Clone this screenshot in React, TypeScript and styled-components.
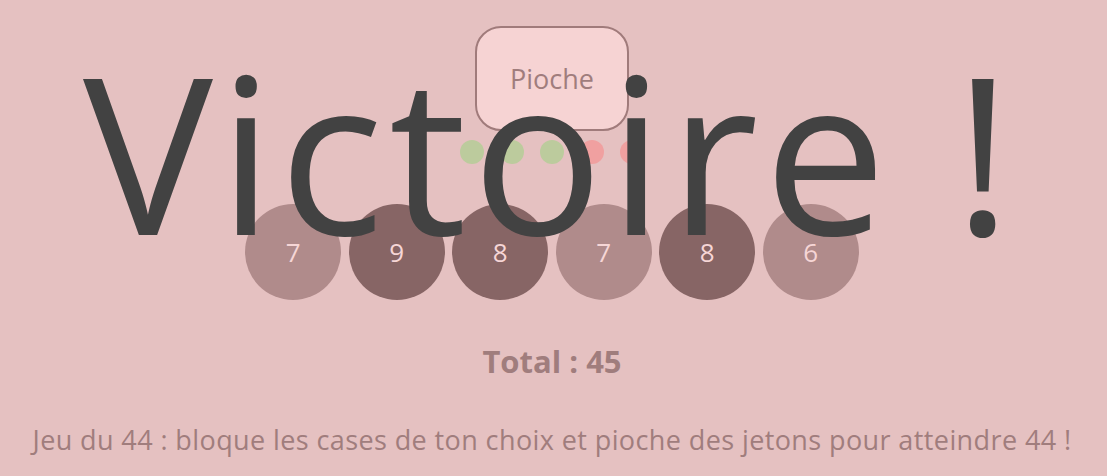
import { FunctionComponent } from 'react';
import styled, { createGlobalStyle } from 'styled-components';

const GlobalStyle = createGlobalStyle`
    html, body {
        margin: 0;
        padding: 0;
        background: #e5c1c1;
    }
    body {
        font-family: 'Open Sans', 'Noto Sans', sans-serif;
    }
`;

const Page = styled.main`
    position: relative;
    height: 476px;
    display: flex;
    flex-direction: column;
    align-items: center;
    padding: 26px 3px 0 0;
    box-sizing: border-box;
    overflow: hidden;
`;

const DrawButton = styled.button`
    width: 154px;
    height: 105px;
    border: 2px solid #a07b7b;
    border-radius: 26px;
    background: #f6d3d3;
    color: #a07d7d;
    font-family: inherit;
    font-size: 27px;
    cursor: pointer;
`;

const DotRow = styled.div`
    display: flex;
    gap: 16px;
    margin-top: 9px;
`;

const Dot = styled.span<{ $used: boolean }>`
    width: 24px;
    height: 24px;
    border-radius: 50%;
    background: ${props => (props.$used ? '#bccb9d' : '#f0a0a0')};
`;

const TileRow = styled.div`
    display: flex;
    gap: 7.5px;
    margin-top: 40px;
`;

const Tile = styled.div<{ $locked: boolean }>`
    width: 96px;
    height: 96px;
    border-radius: 50%;
    display: flex;
    align-items: center;
    justify-content: center;
    background: ${props => (props.$locked ? '#876565' : '#b08b8b')};
    color: #f6d6d6;
    font-size: 26px;
`;

const Total = styled.div`
    margin-top: 40px;
    font-size: 31px;
    font-weight: 700;
    color: #a07d7d;
`;

const Rules = styled.p`
    margin: 39px 0 0;
    font-size: 27px;
    letter-spacing: 0.4px;
    white-space: nowrap;
    color: #a07d7d;
`;

const Victory = styled.div`
    position: absolute;
    top: 0;
    left: 0;
    right: 7px;
    text-align: center;
    font-size: 218px;
    font-weight: 500;
    letter-spacing: 5.5px;
    line-height: 300px;
    margin-top: 1px;
    color: #424242;
    pointer-events: none;
`;

const draws = [true, true, true, false, false];
const tiles = [
    { value: 7, locked: false },
    { value: 9, locked: true },
    { value: 8, locked: true },
    { value: 7, locked: false },
    { value: 8, locked: true },
    { value: 6, locked: false },
];

const App: FunctionComponent = () => {
    const total = tiles.reduce((sum, tile) => sum + tile.value, 0);

    return (
        <>
            <GlobalStyle />
            <Page>
                <DrawButton>Pioche</DrawButton>
                <DotRow>
                    {draws.map((used, i) => (
                        <Dot key={i} $used={used} />
                    ))}
                </DotRow>
                <TileRow>
                    {tiles.map((tile, i) => (
                        <Tile key={i} $locked={tile.locked}>
                            {tile.value}
                        </Tile>
                    ))}
                </TileRow>
                <Total>Total : {total}</Total>
                <Rules>
                    Jeu du 44 : bloque les cases de ton choix et pioche des jetons pour atteindre 44 !
                </Rules>
                <Victory>Victoire !</Victory>
            </Page>
        </>
    );
};

export default App;
